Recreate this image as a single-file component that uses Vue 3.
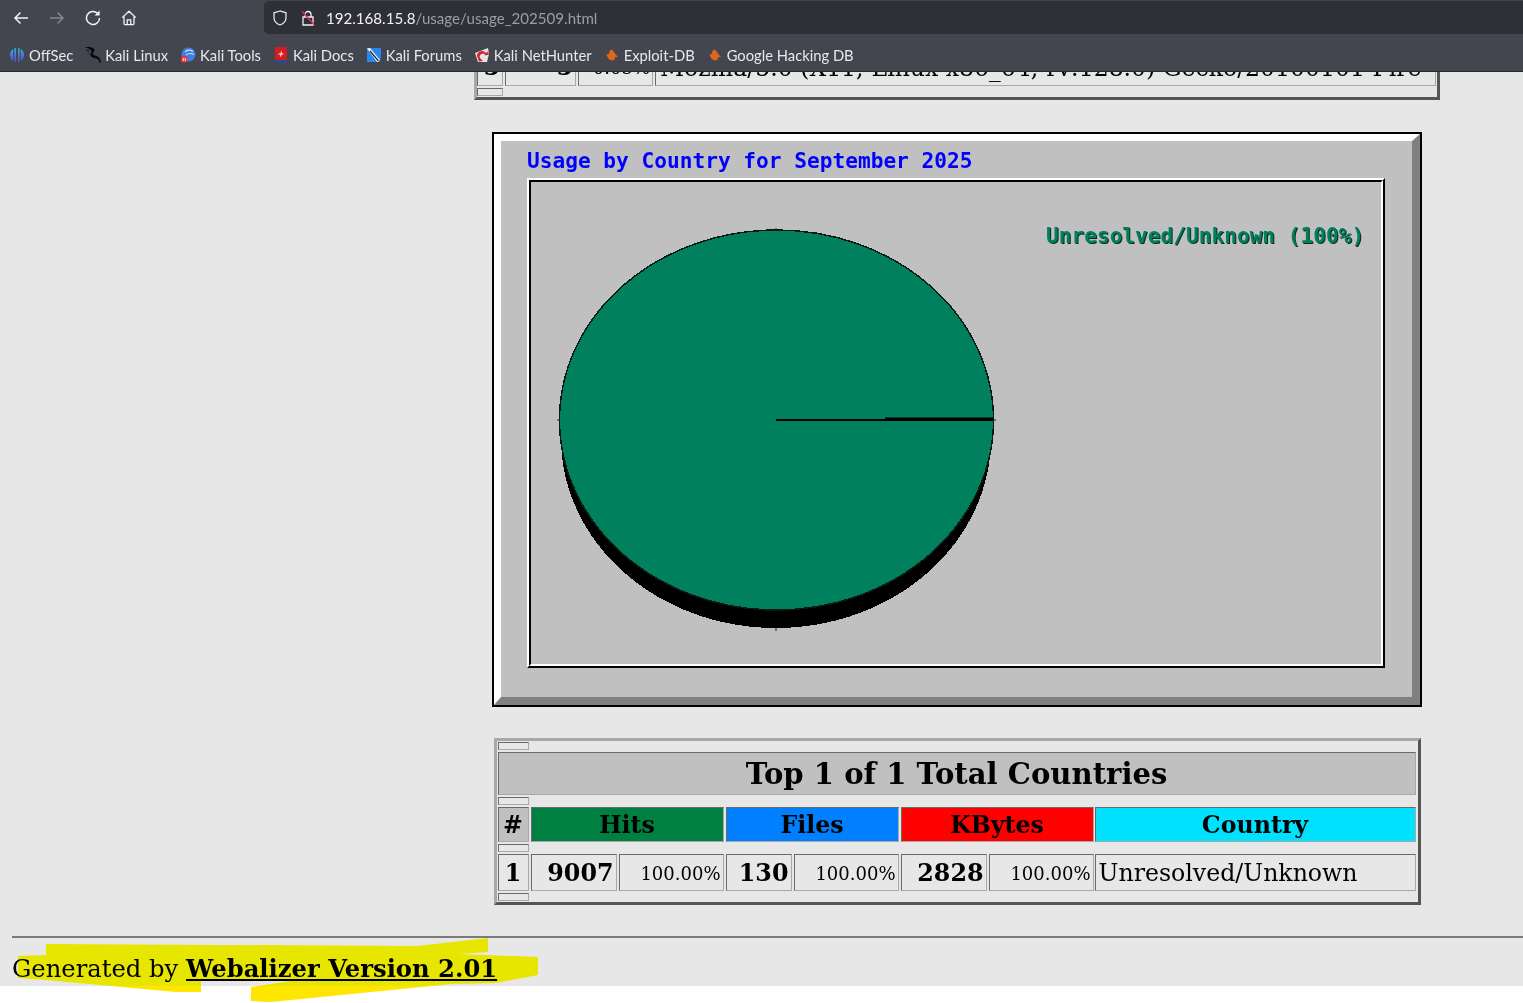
<script setup>
import { ref } from 'vue'

const bookmarks = ref([
  { name: 'OffSec', icon: 'offsec' },
  { name: 'Kali Linux', icon: 'kali' },
  { name: 'Kali Tools', icon: 'tools' },
  { name: 'Kali Docs', icon: 'docs' },
  { name: 'Kali Forums', icon: 'forums' },
  { name: 'Kali NetHunter', icon: 'hunter' },
  { name: 'Exploit-DB', icon: 'bug' },
  { name: 'Google Hacking DB', icon: 'bug' },
])

const columns = ref([
  { label: 'Hits', cls: 'hits' },
  { label: 'Files', cls: 'files' },
  { label: 'KBytes', cls: 'kbytes' },
])

const totals = ref([
  { value: '9007', pct: '100.00%' },
  { value: '130', pct: '100.00%' },
  { value: '2828', pct: '100.00%' },
])
</script>

<template>
  <div class="app">
    <header class="chrome">
      <div class="toolbar">
        <div class="nav">
          <button class="nav-btn">
            <svg viewBox="0 0 16 16" width="16" height="16"><path d="M15 8H2M7.500 2.500 2 8l5.500 5.500" fill="none" stroke="#f2f2f4" stroke-width="1.500"/></svg>
          </button>
          <button class="nav-btn">
            <svg viewBox="0 0 16 16" width="16" height="16"><path d="M1 8h13M8.500 2.500 14 8l-5.500 5.500" fill="none" stroke="#85878d" stroke-width="1.500"/></svg>
          </button>
          <button class="nav-btn">
            <svg viewBox="0 0 16 16" width="16" height="16"><path d="M12.600 3.400A6.500 6.500 0 1 0 14.500 8" fill="none" stroke="#f2f2f4" stroke-width="1.500"/><path d="M9.600 5.400h5V.6z" fill="#f2f2f4"/></svg>
          </button>
          <button class="nav-btn">
            <svg viewBox="0 0 16 16" width="16" height="16"><path d="M1.200 7.600 8 1.200l6.800 6.400M3 6.400v7.100c0 .7.4 1.100 1.100 1.100h7.800c.7 0 1.100-.4 1.100-1.100V6.400M6.200 14.500V9.800h3.600v4.700" fill="none" stroke="#f2f2f4" stroke-width="1.300"/></svg>
          </button>
        </div>
        <div class="urlbar">
          <svg class="shield" viewBox="0 0 16 16" width="16" height="16"><path d="M8 1 2 2.800v5C2 11.500 5.200 14 8 15c2.800-1 6-3.500 6-7.200v-5z" fill="none" stroke="#e6e6e8" stroke-width="1.300"/></svg>
          <svg class="lock" viewBox="0 0 16 16" width="16" height="16">
            <path d="M5 7V4.500a3 3 0 0 1 6 0V7M3 7h10v8H3z" fill="none" stroke="#f0f0f2" stroke-width="1.300"/>
            <path d="M2 1.500 14.500 15" stroke="#e22850" stroke-width="1.400"/>
          </svg>
          <span class="url"><span class="host">192.168.15.8</span>/usage/usage_202509.html</span>
        </div>
      </div>
      <nav class="bookmarks">
        <a v-for="b in bookmarks" :key="b.name" class="bookmark">
          <svg viewBox="0 0 16 16" width="16" height="16" class="fav">
            <template v-if="b.icon === 'offsec'">
              <defs>
                <linearGradient id="off" x1="0" y1="0" x2="0" y2="1">
                  <stop offset="0" stop-color="#27b6d8"/>
                  <stop offset="1" stop-color="#6a3fd6"/>
                </linearGradient>
              </defs>
              <path d="M4.200 2C2.200 3.200 1 5.400 1 8s1.200 4.800 3.200 6zM7 1.100C6 1.200 5.500 1.400 5.300 1.500v13c.2.100.7.300 1.700.4zM9 1.100c1 .1 1.500.3 1.700.4v13c-.2.100-.7.300-1.700.4zM11.800 2C13.800 3.200 15 5.400 15 8s-1.200 4.800-3.200 6z" fill="url(#off)"/>
            </template>
            <template v-else-if="b.icon === 'kali'">
              <path d="M0 0c3-.5 6 0 8.500 1.500 1.800 1.300 1 3-.2 4-1.100 1-.8 2 .8 2.800 1.700.7 4.200 1.200 5.400 2.800.8 1.100 1.300 3 1.300 4.900l-1.400-.2c-.2-2-1.100-3.500-2.800-4.200C8.600 11 6 10.200 5.400 8c-.3-1.600 1-2.700 1.400-3.600C6.200 2.500 3 1.600 0 0z" fill="#08080a"/>
              <path d="M1 3c1.500 0 3 .5 3.800 1.800C3.400 4.500 2 4.200 1 3zM3 6.500c.8-.3 1.500 0 2 .8-.8 0-1.500-.2-2-.8z" fill="#08080a"/>
            </template>
            <template v-else-if="b.icon === 'tools'">
              <circle cx="8.500" cy="7.500" r="7" fill="#3d7fe0"/>
              <path d="M5 5c2-2 5-2.500 8-.5M6 8c2-1.500 5-2 8-.5" fill="none" stroke="#cfe2fa" stroke-width="1.100"/>
              <rect x="1" y="9" width="6.500" height="6.500" rx="2.500" fill="#e8353b"/>
              <path d="M3.300 11v3M5.300 11v3" stroke="#fff" stroke-width=".9"/>
            </template>
            <template v-else-if="b.icon === 'docs'">
              <path d="M2 0h12v13H3.500C2.500 13 2 13.500 2 14z" fill="#d61a1f"/>
              <path d="M2 14c0-.7.6-1 1.500-1H14v3H3.500C2.600 16 2 15 2 14z" fill="#2e4a8f"/>
              <path d="M5.500 7h5M8.500 4.500 7.500 9.500" stroke="#fff" stroke-width="1"/>
            </template>
            <template v-else-if="b.icon === 'forums'">
              <path d="M1 1h14v11l-3 3H1z" fill="#2a86ea"/>
              <path d="M1 1.500 4 1l10 12-1.500 2h-1.500z" fill="#f4f6f8"/>
              <path d="M4 4l8.500 10" stroke="#1a2430" stroke-width="1.200"/>
            </template>
            <template v-else-if="b.icon === 'hunter'">
              <path d="M1 6 14 1l1 6-2 8H4z" fill="#e2e4e8"/>
              <path d="M3 9a5 5 0 0 1 9-3l2-1.500 1 3-3.500 1A3 3 0 0 0 6 11l3 3-4 .5z" fill="#d8242c"/>
            </template>
            <template v-else>
              <path d="M7 2.500c2 .5 3 2 3.500 3.500l3.500 4-3 .2c.3 1.800-.8 3-2.500 3.300-2 0-3.500-1.200-4.500-2.500C3 10 3.500 8.500 2 7.500L5 7c-.2-1.800.7-3.300 2-4.500z" fill="#e0651c"/>
            </template>
          </svg>
          <span>{{ b.name }}</span>
        </a>
      </nav>
    </header>

    <main class="page">
      <div class="content">
        <div class="clip">
          <div class="table agents">
            <div class="cell big right">5</div>
            <div class="cell big right">5</div>
            <div class="cell pct">0.05%</div>
            <div class="cell agent">Mozilla/5.0 (X11; Linux x86_64; rv:128.0) Gecko/20100101 Fire</div>
            <div class="cell spacer"></div>
          </div>
        </div>

        <section class="chart">
          <div class="frame">
            <div class="chart-title">Usage by Country for September 2025</div>
            <div class="panel">
              <div class="panel-in">
                <svg class="pie" viewBox="554 222 446 412" width="446" height="412">
                  <ellipse class="jag" cx="776" cy="438" rx="215" ry="190" fill="#000"/>
                  <ellipse class="jag" cx="776.500" cy="420" rx="217" ry="190" fill="#00805c" stroke="#0a1a14" stroke-width="1.500"/>
                  <path d="M776 420H993" stroke="#000" stroke-width="2"/>
                  <path d="M885 418.500H993" stroke="#000" stroke-width="2"/>
                  <path d="M776 228v3M776 628v3M557 420h3M993 420h3" stroke="#222" stroke-width="1"/>
                </svg>
                <div class="legend">Unresolved/Unknown (100%)</div>
              </div>
            </div>
          </div>
        </section>

        <div class="table countries">
          <div class="cell spacer"></div>
          <div class="cell title">Top 1 of 1 Total Countries</div>
          <div class="cell spacer"></div>
          <div class="cell head num">#</div>
          <div v-for="c in columns" :key="c.label" class="cell head wide" :class="c.cls">{{ c.label }}</div>
          <div class="cell head country">Country</div>
          <div class="cell spacer"></div>
          <div class="cell big center">1</div>
          <template v-for="t in totals" :key="t.value">
            <div class="cell big right">{{ t.value }}</div>
            <div class="cell pct">{{ t.pct }}</div>
          </template>
          <div class="cell name">Unresolved/Unknown</div>
          <div class="cell spacer"></div>
        </div>
      </div>

      <hr class="rule" />
      <p class="footer">Generated by <a class="credit">Webalizer Version 2.01</a></p>
    </main>

    <svg class="marker" viewBox="0 930 560 73" width="560" height="73">
      <polygon points="46,944 417,946 488,938 488,952 459,954 538,957 538,975 496,983 452,984 271,1002 251,1001 251,987 291,981 201,981 201,992 176,992 46,980 18,978 18,956 46,955" fill="#ffe600"/>
    </svg>
  </div>
</template>

<style>
html, body {
  margin: 0;
  background: #fff;
  overflow: hidden;
}
</style>

<style scoped>
.app {
  position: relative;
  height: 1003px;
  overflow: hidden;
  background: #fff;
  font-family: "DejaVu Serif", serif;
  color: #000;
}

.chrome {
  background: #43464e;
  font-family: Lato, "Noto Sans", sans-serif;
  color: #e8e8ea;
}
.toolbar {
  height: 35px;
  display: flex;
  align-items: stretch;
  padding-left: 3px;
}
.nav {
  display: flex;
  width: 144px;
}
.nav-btn {
  width: 36px;
  padding: 0;
  border: 0;
  background: none;
  display: flex;
  align-items: center;
  justify-content: center;
}
.urlbar {
  flex: 1;
  margin: 1px 0 1px 117px;
  background: #2f3036;
  border-radius: 5px 0 0 5px;
  display: flex;
  align-items: center;
  padding-left: 8px;
}
.shield {
  margin-right: 12px;
}
.lock {
  margin-right: 10px;
}
.url {
  font-size: 15.1px;
  color: #9c9ea4;
}
.host {
  color: #f4f4f6;
}
.bookmarks {
  box-sizing: border-box;
  height: 37px;
  padding: 3px 0 0 9px;
  border-bottom: 1px solid #26272b;
  display: flex;
  align-items: center;
  gap: 12px;
}
.bookmark {
  display: flex;
  align-items: center;
  gap: 4px;
  font-size: 14.75px;
}

.page {
  height: 914px;
  overflow: hidden;
  background: #e7e7e7;
}
.content {
  width: 966px;
  margin-left: 474px;
  display: flex;
  flex-direction: column;
  align-items: center;
}
.clip {
  height: 28px;
  width: 100%;
  display: flex;
  align-items: flex-end;
  overflow: hidden;
}

.table {
  display: grid;
  gap: 2px;
  box-sizing: border-box;
  border: 3px solid;
  border-color: #a8a8a8 #555 #555 #a8a8a8;
}
.agents {
  width: 966px;
  grid-template-columns: 26px 71px 75px 781px;
  grid-template-rows: 37px 8px;
  padding: 0 1px 1px 0;
}
.countries {
  width: 927px;
  grid-template-columns: 31px 86px 105px 66px 105px 86px 105px 320px;
  grid-template-rows: 8px 43px 8px 35px 8px 37px 8px;
  padding: 1px;
  margin-top: 31px;
}
.cell {
  box-sizing: border-box;
  border: 1px solid;
  border-color: #6a6a6a #a8a8a8 #a8a8a8 #6a6a6a;
  min-width: 0;
  white-space: nowrap;
  overflow: hidden;
}
.spacer,
.num,
.center {
  grid-column: 1;
}
.title {
  grid-column: 1 / -1;
  background: #c0c0c0;
  font-size: 29.1px;
  font-weight: 700;
  line-height: 43px;
  text-align: center;
}
.head {
  font-size: 23.7px;
  font-weight: 700;
  line-height: 35px;
  text-align: center;
}
.wide {
  grid-column: span 2;
}
.num {
  background: #c0c0c0;
}
.hits {
  background: #008040;
}
.files {
  background: #0080ff;
}
.kbytes {
  background: #ff0000;
}
.country {
  margin-left: -1px;
  background: #00e0ff;
}
.big {
  font-size: 23.8px;
  font-weight: 700;
  line-height: 37px;
}
.center {
  text-align: center;
}
.right {
  text-align: right;
  padding-right: 2px;
}
.pct {
  font-size: 18px;
  line-height: 37px;
  text-align: right;
  padding-right: 2px;
}
.name {
  margin-left: -1px;
  font-size: 23.64px;
  line-height: 37px;
  padding-left: 3px;
}
.agent {
  font-size: 23.55px;
  line-height: 36px;
  padding-left: 4px;
}
.agents .big,
.agents .pct {
  line-height: 35px;
}

.chart {
  box-sizing: border-box;
  width: 930px;
  margin-top: 32px;
  border: 2px solid #000;
}
.frame {
  border-style: solid;
  border-width: 7px 8px 8px 7px;
  border-color: #fff #808080 #808080 #fff;
  background: #c0c0c0;
  padding: 0 0 29px 26px;
}
.chart-title {
  height: 37px;
  line-height: 39px;
  font-family: "DejaVu Sans Mono", monospace;
  font-weight: 700;
  font-size: 21.15px;
  color: #0000ff;
}
.panel {
  box-sizing: border-box;
  width: 858px;
  height: 490px;
  border: 2px solid;
  border-color: #fff #000 #000 #fff;
}
.panel-in {
  box-sizing: border-box;
  height: 100%;
  border: 2px solid;
  border-color: #000 #fff #fff #000;
  display: flex;
  align-items: flex-start;
  padding: 40px 0 0 23px;
}
.pie {
  flex: none;
}
.jag {
  shape-rendering: crispEdges;
}
.legend {
  margin: 2px 0 0 46px;
  font-family: "DejaVu Sans Mono", monospace;
  font-weight: 700;
  font-size: 21.15px;
  line-height: 24px;
  color: #00805c;
  text-shadow: 1px 1px 0 #0b2a20;
}

.rule {
  margin: 31px 0 0 12px;
  border: 0;
  border-top: 2px solid #7a7a7a;
}
.footer {
  margin: 0 0 0 12px;
  padding-top: 16px;
  font-size: 24.25px;
  line-height: 30px;
}
.credit {
  font-weight: 700;
  text-decoration: underline;
}

.marker {
  position: absolute;
  left: 0;
  top: 930px;
  mix-blend-mode: darken;
}
</style>
